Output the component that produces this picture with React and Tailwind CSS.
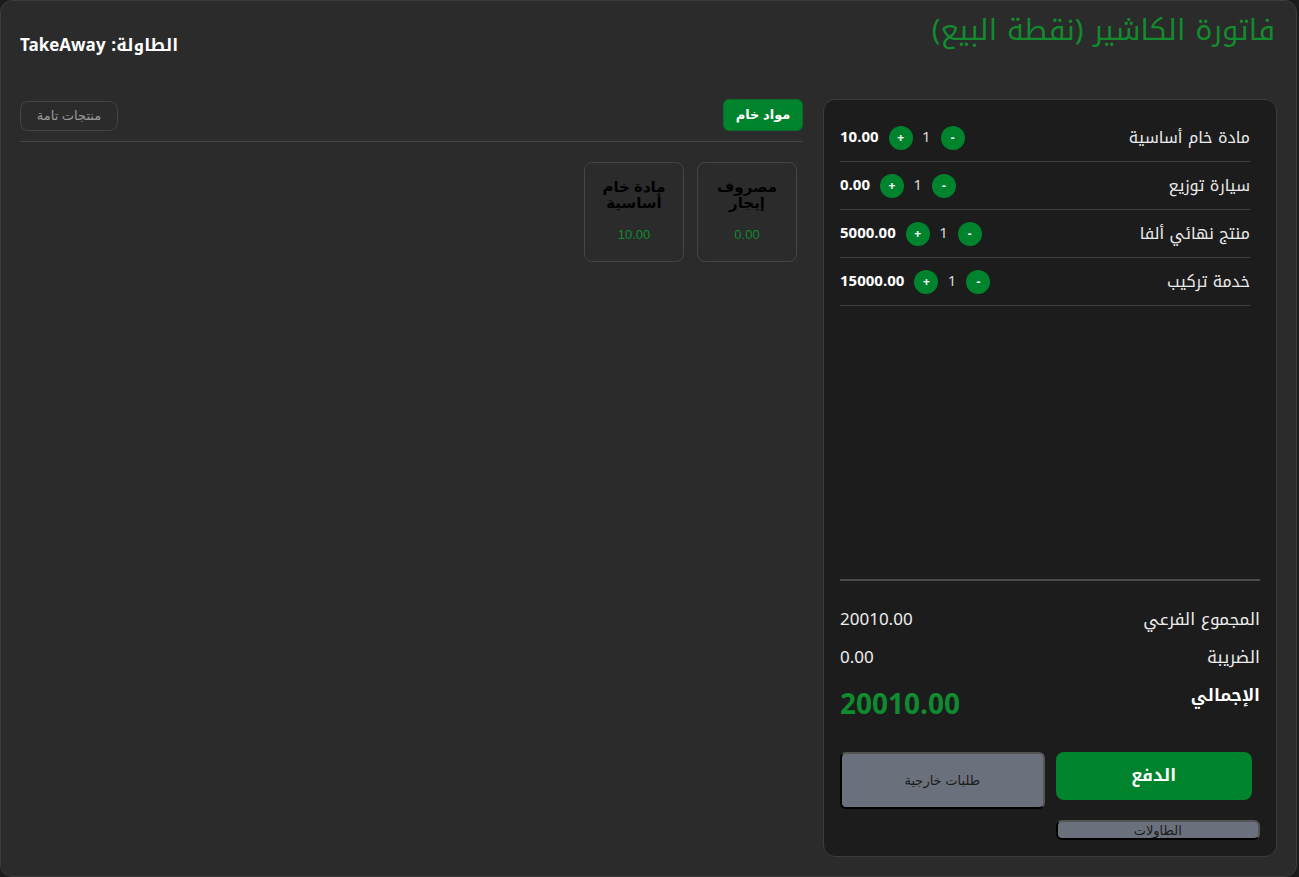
import React from 'react';

const items = [
  { name: 'مادة خام أساسية', qty: 1, price: '10.00' },
  { name: 'سيارة توزيع', qty: 1, price: '0.00' },
  { name: 'منتج نهائي ألفا', qty: 1, price: '5000.00' },
  { name: 'خدمة تركيب', qty: 1, price: '15000.00' },
];

const products = [
  { name: 'مصروف إيجار', price: '0.00' },
  { name: 'مادة خام أساسية', price: '10.00' },
];

const kufi = "font-['Noto_Kufi_Arabic','Noto_Sans_Arabic','Noto_Sans','DejaVu_Sans',sans-serif]";
const arial = "font-['Liberation_Sans','DejaVu_Sans',sans-serif]";

// round green +/- button in the cart rows
const QtyButton = ({ children }) => (
  <button className="w-6 h-6 rounded-full bg-[#00832d] text-white text-[12px] font-bold flex items-center justify-center leading-none">
    {children}
  </button>
);

const CartRow = ({ item }) => (
  <div className="flex items-center justify-between h-[47px] border-b border-[#3f3f3f] box-content">
    <span className="text-[16px] text-[#ececec]">{item.name}</span>
    <div className="flex items-center gap-[10px]">
      <QtyButton>-</QtyButton>
      <span className="text-[15px] text-[#d8d8d8] w-2 text-center">{item.qty}</span>
      <QtyButton>+</QtyButton>
      <span className="text-[15px] font-bold text-white">{item.price}</span>
    </div>
  </div>
);

const ProductCard = ({ product }) => (
  <div className={`w-[100px] h-[100px] rounded-lg border border-[#444] flex flex-col items-center justify-center text-center px-4 ${arial}`}>
    <div className="text-[15px] font-bold leading-[16px] text-black">{product.name}</div>
    <div className="mt-[14px] text-[13px] text-[#0f8a2f]">{product.price}</div>
  </div>
);

export default function App() {
  return (
    <div dir="rtl" className={`w-full h-screen overflow-hidden bg-[#1b1b1b] ${kufi}`}>
      <div className="w-[1297px] mr-auto ml-0 h-[877px] bg-[#2b2b2b] border border-[#3c3c3c] rounded-xl px-[19px] pt-[8px]">
        {/* header */}
        <div className="flex items-start justify-between h-[90px]">
          <h1 className="text-[29px] leading-[40px] pt-[2px] text-[#128a2e] pr-[2px]">فاتورة الكاشير (نقطة البيع)</h1>
          <div className="pt-[24px] text-[17px] leading-6 font-bold text-white">الطاولة: TakeAway</div>
        </div>

        <div className="flex gap-5">
          {/* cart panel */}
          <div className="w-[454px] h-[758px] shrink-0 bg-[#1c1c1c] border border-[#3c3c3c] rounded-xl px-4 pt-[14px] pb-4 flex flex-col">
            <div className="flex-1 pr-[10px]">
              {items.map((item) => (
                <CartRow key={item.name} item={item} />
              ))}
            </div>

            <div className="border-t-2 border-[#4a4a4a] pt-[26px]">
              <div className="flex justify-between text-[17px] leading-6 text-[#ececec]">
                <span>المجموع الفرعي</span>
                <span>20010.00</span>
              </div>
              <div className="flex justify-between text-[17px] leading-6 text-[#ececec] mt-[14px]">
                <span>الضريبة</span>
                <span>0.00</span>
              </div>
              <div className="flex justify-between items-start mt-[14px]">
                <span className="text-[17px] leading-6 font-bold text-white">الإجمالي</span>
                <span className="text-[28px] leading-[40px] font-bold text-[#0f8a2f] mt-[2px]">20010.00</span>
              </div>
            </div>

            <div className="grid grid-cols-2 gap-[11px] mt-[27px]">
              <button className="mr-2 h-12 rounded-lg bg-[#00832d] text-white text-[17px] font-bold">الدفع</button>
              <button className={`h-[57px] rounded-md bg-[#6b717c] border-2 border-t-[#555] border-r-[#555] border-b-black border-l-black text-[13px] text-[#1c1c1c] ${arial}`}>طلبات خارجية</button>
              <button className={`h-5 rounded-md bg-[#6b717c] border-2 border-t-[#555] border-r-[#555] border-b-black border-l-black text-[13px] leading-none text-[#1c1c1c] ${arial}`}>الطاولات</button>
            </div>
          </div>

          {/* products area */}
          <div className="flex-1">
            <div className="flex items-end justify-between pb-[10px] border-b border-[#444]">
              <button className={`h-8 w-[80px] rounded-md bg-[#00832d] border border-[#0a6d28] text-white text-[13px] font-bold ${arial}`}>مواد خام</button>
              <button className={`h-[30px] w-[98px] rounded-lg border border-[#444] text-[13px] text-[#9a9a9a] ${arial}`}>منتجات تامة</button>
            </div>
            <div className="flex flex-wrap gap-[13px] pr-[6px] mt-5">
              {products.map((p) => (
                <ProductCard key={p.name} product={p} />
              ))}
            </div>
          </div>
        </div>
      </div>
    </div>
  );
}
